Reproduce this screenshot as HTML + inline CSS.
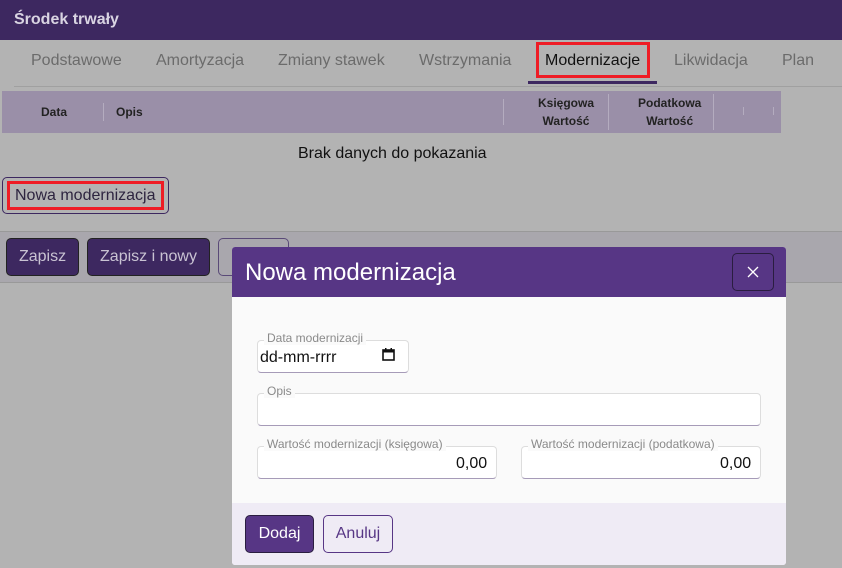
<!DOCTYPE html>
<html><head><meta charset="utf-8"><style>
*{box-sizing:border-box;margin:0;padding:0}
body{width:842px;height:568px;overflow:hidden;background:#b3b3b3;font-family:"Liberation Sans",Arial,sans-serif;position:relative}
.a{position:absolute}
.hdr{left:0;top:0;width:842px;height:40px;background:#3d2860;color:#d9d4e2;font-weight:bold;font-size:16px;padding:11px 14px}
.tab{top:52px;font-size:16px;color:#6b6b6b}
.tbl{left:2px;top:91px;width:779px;height:42px;background:#9a8fa8;font-size:12px;font-weight:bold;color:#222}
.sep{width:1px;background:#b4acbf}
.btn{border-radius:5px;font-size:16px;text-align:center}
.dark{background:#3d2860;color:#c9c3d3;border:1px solid #222}
.modal{left:232px;top:247px;width:554px;height:318px;background:#fafafa;border-radius:3px;overflow:hidden}
.fld{background:#fff;border:1px solid #ddd;border-bottom:1px solid #a69bb8;border-radius:4px}
.lbl{font-size:12px;color:#8a8a8a;background:#fafafa;padding:0 3px}
</style></head><body>
<div class="a hdr">Środek trwały</div>
<div class="a" style="left:14px;top:86px;width:828px;height:1px;background:#a0a0a0"></div>
<div class="a tab" style="left:31px">Podstawowe</div>
<div class="a tab" style="left:156px">Amortyzacja</div>
<div class="a tab" style="left:278px">Zmiany stawek</div>
<div class="a tab" style="left:419px">Wstrzymania</div>
<div class="a tab" style="left:545px;color:#111">Modernizacje</div>
<div class="a" style="left:536px;top:42px;width:114px;height:36px;border:3px solid #ee1c25"></div>
<div class="a" style="left:528px;top:81px;width:129px;height:3px;background:#3d2860"></div>
<div class="a tab" style="left:674px">Likwidacja</div>
<div class="a tab" style="left:782px">Plan</div>
<div class="a tbl">
<div class="a" style="left:39px;top:14px">Data</div>
<div class="a sep" style="left:101px;top:12px;height:18px"></div>
<div class="a" style="left:114px;top:14px">Opis</div>
<div class="a sep" style="left:501px;top:8px;height:26px"></div>
<div class="a" style="left:536px;top:3px;text-align:center;line-height:18px">Księgowa<br>Wartość</div>
<div class="a sep" style="left:606px;top:3px;height:36px"></div>
<div class="a" style="left:636px;top:3px;text-align:center;line-height:18px">Podatkowa<br>Wartość</div>
<div class="a sep" style="left:711px;top:3px;height:36px"></div>
<div class="a sep" style="left:741px;top:16px;height:8px"></div>
<div class="a sep" style="left:771px;top:16px;height:8px"></div>
</div>
<div class="a" style="left:298px;top:145px;font-size:16px;color:#111">Brak danych do pokazania</div>
<div class="a btn" style="left:2px;top:177px;width:167px;height:37px;border:1px solid #3d2860"></div>
<div class="a" style="left:7px;top:181px;width:157px;height:29px;border:3px solid #ee1c25;font-size:16px;color:#2e2540;padding:3px 5px">Nowa modernizacja</div>
<div class="a" style="left:0;top:231px;width:842px;height:52px;background:#a9a7ad;border-top:1px solid #999;border-bottom:1px solid #999"></div>
<div class="a btn dark" style="left:6px;top:238px;width:73px;height:38px;padding-top:9px">Zapisz</div>
<div class="a btn dark" style="left:87px;top:238px;width:123px;height:38px;padding-top:9px">Zapisz i nowy</div>
<div class="a btn" style="left:218px;top:238px;width:71px;height:38px;border:1px solid #5a4a78"></div>
<div class="a modal">
<div class="a" style="left:0;top:0;width:554px;height:50px;background:#573685"></div>
<div class="a" style="left:13px;top:12px;font-size:24px;color:#fff">Nowa modernizacja</div>
<div class="a" style="left:500px;top:6px;width:42px;height:38px;border:1px solid #2a1d40;border-radius:5px"></div>
<svg class="a" style="left:515px;top:19px" width="12" height="12" viewBox="0 0 12 12"><path d="M1 1L11 11M11 1L1 11" stroke="#fff" stroke-width="1.3"/></svg>
<div class="a fld" style="left:25px;top:93px;width:152px;height:33px"></div>
<div class="a" style="left:28px;top:102px;font-size:16px;color:#111">dd-mm-rrrr</div>
<svg class="a" style="left:149px;top:100px" width="15" height="15" viewBox="0 0 15 15"><rect x="2" y="3" width="11" height="10" fill="none" stroke="#111" stroke-width="1.6"/><rect x="2" y="3" width="11" height="2.5" fill="#111"/><rect x="4" y="1" width="1.5" height="3" fill="#111"/><rect x="9.5" y="1" width="1.5" height="3" fill="#111"/></svg>
<div class="a lbl" style="left:32px;top:84px">Data modernizacji</div>
<div class="a fld" style="left:25px;top:146px;width:504px;height:33px"></div>
<div class="a lbl" style="left:32px;top:137px">Opis</div>
<div class="a fld" style="left:25px;top:199px;width:240px;height:33px"></div>
<div class="a lbl" style="left:32px;top:190px">Wartość modernizacji (księgowa)</div>
<div class="a" style="left:224px;top:208px;font-size:16px;color:#111">0,00</div>
<div class="a fld" style="left:289px;top:199px;width:240px;height:33px"></div>
<div class="a lbl" style="left:296px;top:190px">Wartość modernizacji (podatkowa)</div>
<div class="a" style="left:488px;top:208px;font-size:16px;color:#111">0,00</div>
<div class="a" style="left:0;top:256px;width:554px;height:62px;background:#efebf5"></div>
<div class="a btn" style="left:13px;top:268px;width:69px;height:38px;background:#573685;color:#fff;border:1px solid #2a1d40;padding-top:9px">Dodaj</div>
<div class="a btn" style="left:91px;top:268px;width:70px;height:38px;border:1px solid #573685;color:#573685;padding-top:9px">Anuluj</div>
</div>
</body></html>
